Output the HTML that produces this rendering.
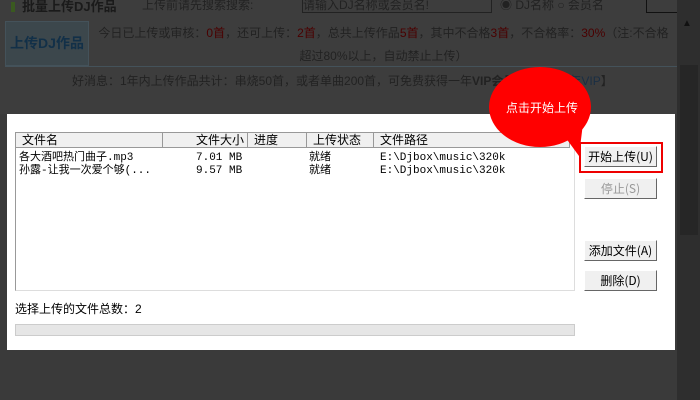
<!DOCTYPE html>
<html><head><meta charset="utf-8"><style>
body{margin:0;width:700px;height:400px;background:#3a3a3a;position:relative;overflow:hidden;font-family:"Liberation Sans","Noto Sans CJK SC",sans-serif;font-size:12px}
.a{position:absolute;white-space:nowrap}
.btn{position:absolute;left:584px;width:71px;height:19px;background:#f0f0f0;border:1px solid #fff;border-right-color:#666;border-bottom-color:#666;text-align:center;line-height:19px;font-family:"WenQuanYi Zen Hei","Noto Sans CJK SC",sans-serif;font-size:12px;color:#000}
.hd{position:absolute;top:133px;height:15px;background:#f0f0f0;border-right:1px solid #999;border-bottom:1px solid #999;line-height:15px;padding-left:6px;box-sizing:border-box;font-family:"WenQuanYi Zen Hei",sans-serif;font-size:12px}
.r{position:absolute;font-family:"WenQuanYi Zen Hei","Liberation Mono",monospace;font-size:11px;line-height:13px;white-space:nowrap}
</style></head><body>
<div class="a" style="left:0;top:0;width:677px;height:114px;background:#3d3d3d"></div>
<div class="a" style="left:11px;top:2px;width:4px;height:10px;background:#3a5a20"></div>
<div class="a" style="left:22px;top:-4px;color:#1a1a1a;font-weight:bold;font-size:13px">批量上传DJ作品</div>
<div class="a" style="left:142px;top:-4px;color:#222;font-size:12px">上传前请先搜索搜索:</div>
<div class="a" style="left:302px;top:-3px;width:188px;height:14px;border:1px solid #222;color:#222;font-size:12px;line-height:14px;overflow:hidden">请输入DJ名称或会员名!</div>
<div class="a" style="left:500px;top:-4px;color:#222">◉ DJ名称 ○ 会员名</div>
<div class="a" style="left:646px;top:-3px;width:30px;height:14px;border:1px solid #111"></div>
<div class="a" style="left:5px;top:21px;width:82px;height:43px;background:#3c474c;border:1px solid #44525a;color:#123048;font-weight:bold;font-size:14px;text-align:center;line-height:43px">上传DJ作品</div>
<div class="a" style="left:90px;top:22px;width:587px;overflow:hidden;color:#222;font-size:12px;line-height:23px;text-align:center">今日已上传或审核：<span style="color:#4a0000">0首</span>，还可上传：<span style="color:#4a0000">2首</span>，总共上传作品<span style="color:#4a0000">5首</span>，其中不合格<span style="color:#4a0000">3首</span>，不合格率：<span style="color:#4a0000">30%</span>（注:不合格<br>超过80%以上，自动禁止上传）</div>
<div class="a" style="left:5px;top:66px;width:672px;height:1px;background:#44525a"></div>
<div class="a" style="left:72px;top:72px;color:#222;font-size:12px">好消息：1年内上传作品共计：串烧50首，或者单曲200首，可免费获得一年<b>VIP会员</b>，【申请<span style="color:#1a2e44">一年VIP</span>】</div>
<div class="a" style="left:677px;top:0;width:23px;height:400px;background:#2e2e2e"></div>
<div class="a" style="left:682px;top:18px;color:#111;font-size:10px">▲</div>
<div class="a" style="left:680px;top:65px;width:18px;height:170px;background:#262626"></div>
<div class="a" style="left:7px;top:114px;width:668px;height:236px;background:#fff"></div>
<div class="a" style="left:15px;top:132px;width:558px;height:157px;border:1px solid #999;border-right-color:#ddd;border-bottom-color:#ddd;background:#fff"></div>
<div class="hd" style="left:16px;width:147px">文件名</div>
<div class="hd" style="left:163px;width:85px;text-align:right;padding-right:3px">文件大小</div>
<div class="hd" style="left:248px;width:59px">进度</div>
<div class="hd" style="left:307px;width:67px">上传状态</div>
<div class="hd" style="left:374px;width:196px">文件路径</div>
<div class="r" style="left:19px;top:152px">各大酒吧热门曲子.mp3<br>孙露-让我一次爱个够(...</div>
<div class="r" style="left:196px;top:152px">7.01 MB<br>9.57 MB</div>
<div class="r" style="left:309px;top:152px">就绪<br>就绪</div>
<div class="r" style="left:380px;top:152px">E:\Djbox\music\320k<br>E:\Djbox\music\320k</div>
<div class="a" style="left:15px;top:300px;font-family:'WenQuanYi Zen Hei',sans-serif;font-size:12px">选择上传的文件总数：2</div>
<div class="a" style="left:15px;top:324px;width:558px;height:10px;background:#e6e6e6;border:1px solid #ccc"></div>
<div class="a" style="left:579px;top:142px;width:80px;height:27px;border:2px solid #e00"></div>
<div class="btn" style="top:146px">开始上传(U)</div>
<div class="btn" style="top:178px;color:#999">停止(S)</div>
<div class="btn" style="top:240px">添加文件(A)</div>
<div class="btn" style="top:270px">删除(D)</div>
<svg class="a" style="left:480px;top:60px" width="120" height="100"><path d="M80 70 L99 96 L104 55 Z" fill="#f00"/><ellipse cx="60" cy="47" rx="51" ry="40" fill="#f00"/><text x="62" y="52" fill="#fff" font-size="12" text-anchor="middle" font-family="WenQuanYi Zen Hei,sans-serif">点击开始上传</text></svg>
</body></html>
